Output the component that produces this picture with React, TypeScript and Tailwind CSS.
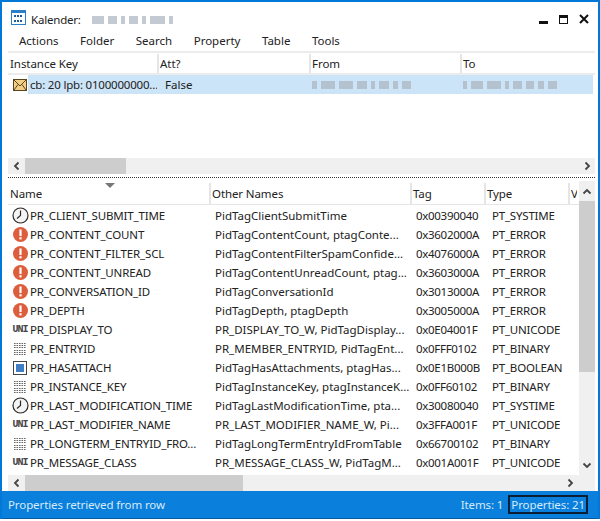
const UPPER_COLS = 'grid grid-cols-[149px_152px_151px_133px]';
const LOWER_COLS = 'grid grid-cols-[201px_201px_74px_84px_9px]';

type Kind = 'clock' | 'error' | 'uni' | 'bin' | 'bool';

const ROWS: [Kind, string, string, string, string][] = [
  ['clock', 'PR_CLIENT_SUBMIT_TIME', 'PidTagClientSubmitTime', '0x00390040', 'PT_SYSTIME'],
  ['error', 'PR_CONTENT_COUNT', 'PidTagContentCount, ptagConte...', '0x3602000A', 'PT_ERROR'],
  ['error', 'PR_CONTENT_FILTER_SCL', 'PidTagContentFilterSpamConfide...', '0x4076000A', 'PT_ERROR'],
  ['error', 'PR_CONTENT_UNREAD', 'PidTagContentUnreadCount, ptag...', '0x3603000A', 'PT_ERROR'],
  ['error', 'PR_CONVERSATION_ID', 'PidTagConversationId', '0x3013000A', 'PT_ERROR'],
  ['error', 'PR_DEPTH', 'PidTagDepth, ptagDepth', '0x3005000A', 'PT_ERROR'],
  ['uni', 'PR_DISPLAY_TO', 'PR_DISPLAY_TO_W, PidTagDisplay...', '0x0E04001F', 'PT_UNICODE'],
  ['bin', 'PR_ENTRYID', 'PR_MEMBER_ENTRYID, PidTagEnt...', '0x0FFF0102', 'PT_BINARY'],
  ['bool', 'PR_HASATTACH', 'PidTagHasAttachments, ptagHas...', '0x0E1B000B', 'PT_BOOLEAN'],
  ['bin', 'PR_INSTANCE_KEY', 'PidTagInstanceKey, ptagInstanceK...', '0x0FF60102', 'PT_BINARY'],
  ['clock', 'PR_LAST_MODIFICATION_TIME', 'PidTagLastModificationTime, pta...', '0x30080040', 'PT_SYSTIME'],
  ['uni', 'PR_LAST_MODIFIER_NAME', 'PR_LAST_MODIFIER_NAME_W, Pi...', '0x3FFA001F', 'PT_UNICODE'],
  ['bin', 'PR_LONGTERM_ENTRYID_FRO...', 'PidTagLongTermEntryIdFromTable', '0x66700102', 'PT_BINARY'],
  ['uni', 'PR_MESSAGE_CLASS', 'PR_MESSAGE_CLASS_W, PidTagM...', '0x001A001F', 'PT_UNICODE'],
];

function PropIcon({ kind }: { kind: Kind }) {
  if (kind === 'clock') {
    return (
      <svg width="17" height="17" viewBox="0 0 17 17" fill="none">
        <circle cx="8.5" cy="8.5" r="7.5" fill="#f4f4f4" stroke="#2b2b2b" strokeWidth="1.2" />
        <path d="M8.5 3.5V8.5L5 11.5" stroke="#2b2b2b" strokeWidth="1.2" />
      </svg>
    );
  }
  if (kind === 'error') {
    return (
      <svg width="15" height="15" viewBox="0 0 15 15">
        <circle cx="7.5" cy="7.5" r="7.5" fill="#dc5e3c" />
        <rect x="6.4" y="2.5" width="2.2" height="6.5" fill="#fff" />
        <rect x="6.4" y="10.2" width="2.2" height="2.2" fill="#fff" />
      </svg>
    );
  }
  if (kind === 'uni') {
    return (
      <span className="font-['Liberation_Mono',monospace] text-[10px] font-bold leading-none tracking-[-1px] text-[#444]">
        UNI
      </span>
    );
  }
  if (kind === 'bin') {
    return (
      <svg width="12" height="12" viewBox="0 0 12 12" fill="#666">
        {[0, 2, 4, 7, 9, 11].map((y) =>
          [0, 2.5, 5, 7.5, 10].map((x) => <rect key={`${x}-${y}`} x={x} y={y} width="1.6" height="1" />),
        )}
      </svg>
    );
  }
  return (
    <svg width="14" height="14" viewBox="0 0 14 14">
      <rect x="0.5" y="0.5" width="13" height="13" fill="#fff" stroke="#444" />
      <rect x="3" y="3" width="8" height="8" fill="#3f7ec4" />
    </svg>
  );
}

function Chevron({ dir }: { dir: 'left' | 'right' | 'up' | 'down' }) {
  const d = {
    left: 'M6.5 1.5L3 5L6.5 8.5',
    right: 'M3.5 1.5L7 5L3.5 8.5',
    up: 'M1.5 6.5L5 3L8.5 6.5',
    down: 'M1.5 3.5L5 7L8.5 3.5',
  }[dir];
  return (
    <svg width="10" height="10" viewBox="0 0 10 10" fill="none">
      <path d={d} stroke="#444" strokeWidth="1.8" />
    </svg>
  );
}

// stands in for the pixelated text in the picture
function Smudge({ widths }: { widths: number[] }) {
  return (
    <div className="flex items-center gap-[4px] blur-[0.6px]">
      {widths.map((w, i) => (
        <div key={i} className="h-[8px] bg-[#a9b4bd] opacity-70" style={{ width: w }} />
      ))}
    </div>
  );
}

function HeaderCell({ label, first }: { label: string; first?: boolean }) {
  return (
    <div className={`flex items-center overflow-hidden leading-[18px] ${first ? 'pl-[2px]' : 'border-l-2 border-[#e5e5e5] pl-[1px]'}`}>
      <span>{label}</span>
    </div>
  );
}

function HScroll({ thumb, end }: { thumb: string; end: string }) {
  return (
    <div className={`flex h-[16px] items-center justify-between bg-[#f0f0f0] ${end}`}>
      <div className="flex h-full items-center">
        <div className="flex w-[17px] justify-center">
          <Chevron dir="left" />
        </div>
        <div className={`h-full bg-[#cdcdcd] ${thumb}`} />
      </div>
      <Chevron dir="right" />
    </div>
  );
}

export default function App() {
  return (
    <div className="h-[521px] w-[600px] overflow-hidden bg-white">
      <div className="flex h-[519px] w-full flex-col border-x-2 border-t-2 border-[#0078d7] font-['Noto_Sans',sans-serif] text-[11.5px] leading-none text-[#222]">
        <div className="flex h-[30px] shrink-0 items-center justify-between px-[9px]">
          <div className="flex items-center gap-[5px]">
            <svg width="15" height="15" viewBox="0 0 15 15">
              <rect x="0.5" y="0.5" width="14" height="14" fill="#fff" stroke="#2a7fc9" />
              <rect x="1" y="1" width="13" height="2" fill="#2a7fc9" />
              {[4, 7, 10].map((x) => (
                <g key={x} fill="#1c5c9c">
                  <rect x={x - 1} y="5" width="2" height="2" />
                  <rect x={x - 1} y="10" width="2" height="2" />
                </g>
              ))}
            </svg>
            <span className="mt-[5px] tracking-[-0.2px]">Kalender:</span>
            <div className="mt-[5px] ml-[6px]">
              <Smudge widths={[12, 9, 4, 9, 4, 15, 4]} />
            </div>
          </div>
          <div className="mt-[4px] flex items-center gap-[11px]">
            <div className="mt-[6px] h-[3px] w-[9px] bg-[#111]" />
            <div className="h-[9px] w-[9px] border border-t-[3px] border-[#111]" />
            <svg width="10" height="10" viewBox="0 0 10 10">
              <path d="M1 1L9 9M9 1L1 9" stroke="#111" strokeWidth="2" />
            </svg>
          </div>
        </div>
        <div className="mb-[2px] flex h-[17px] shrink-0 items-center gap-[21.5px] pl-[17px]">
          <span>Actions</span>
          <span>Folder</span>
          <span>Search</span>
          <span>Property</span>
          <span>Table</span>
          <span>Tools</span>
        </div>
        <div className="mr-[3px] ml-[6px] flex h-[107px] shrink-0 flex-col">
          <div className={`${UPPER_COLS} h-[24px] shrink-0 border-y-2 border-[#ececec] pt-[1px] tracking-[-0.05px]`}>
            <HeaderCell label="Instance Key" first />
            <HeaderCell label="Att?" />
            <HeaderCell label="From" />
            <HeaderCell label="To" />
          </div>
          <div className={`${UPPER_COLS} h-[19px] shrink-0 items-center`}>
            <div className="flex items-center overflow-hidden">
              <svg className="ml-[5px] shrink-0" width="14" height="12" viewBox="0 0 14 12">
                <rect x="0.5" y="0.5" width="13" height="11" fill="#f2cf85" stroke="#5a4520" />
                <path d="M1 1L7 7L13 1M1 11L5 5.5M13 11L9 5.5" fill="none" stroke="#5a4520" />
              </svg>
              <div className="ml-[1px] h-[19px] flex-1 whitespace-nowrap bg-[#cce4f7] pl-[2px] leading-[20px] tracking-[-0.2px]">
                cb: 20 lpb: 0100000000...
              </div>
            </div>
            <div className="h-[19px] bg-[#cce4f7] pl-[8px] leading-[20px]">False</div>
            <div className="flex h-[19px] items-center bg-[#cce4f7] pl-[3px]">
              <Smudge widths={[5, 14, 14, 10, 4, 10, 5, 9]} />
            </div>
            <div className="flex h-[19px] items-center bg-[#cce4f7] pl-[3px]">
              <Smudge widths={[4, 12, 14, 4, 9, 8, 6, 9]} />
            </div>
          </div>
        </div>
        <div className="mr-[3px] ml-[6px] shrink-0">
          <HScroll thumb="w-[101px]" end="pr-[3px]" />
        </div>
        <div className="mt-[3px] mr-[3px] ml-[6px] shrink-0 border-t border-dotted border-[#333]" />
        <div className="mr-[3px] ml-[6px] flex h-[297px] shrink-0">
          <div className="min-w-0 flex-1">
            <div className="relative h-[28px]">
              <svg className="absolute top-[5px] left-[97px]" width="10" height="5" viewBox="0 0 10 5">
                <path d="M0 0H10L5 5Z" fill="#777" />
              </svg>
              <div className={`${LOWER_COLS} h-[27px] overflow-hidden border-b border-[#e5e5e5] pt-[5px] tracking-[-0.1px]`}>
                <HeaderCell label="Name" first />
                <HeaderCell label="Other Names" />
                <HeaderCell label="Tag" />
                <HeaderCell label="Type" />
                <HeaderCell label="V" />
              </div>
            </div>
            {ROWS.map(([kind, name, other, tag, type]) => (
              <div key={name} className={`${LOWER_COLS} h-[19px] items-center whitespace-nowrap leading-[19px]`}>
                <div className="flex items-center overflow-hidden">
                  <div className="flex w-[22px] shrink-0 justify-center pl-[2px]">
                    <PropIcon kind={kind} />
                  </div>
                  <span className="tracking-[-0.15px]">{name}</span>
                </div>
                <div className="overflow-hidden pl-[6px]">{other}</div>
                <div className="pl-[6px] tracking-[-0.3px]">{tag}</div>
                <div className="pl-[8px] tracking-[-0.2px]">{type}</div>
                <div />
              </div>
            ))}
          </div>
          <div className="mt-[3px] flex w-[16px] flex-col items-center bg-[#f0f0f0]">
            <div className="mt-[6px]">
              <Chevron dir="up" />
            </div>
            <div className="mt-[4px] h-[171px] w-full bg-[#cdcdcd]" />
            <div className="mt-auto mb-[5px]">
              <Chevron dir="down" />
            </div>
          </div>
        </div>
        <div className="mr-[3px] ml-[6px] shrink-0">
          <HScroll thumb="w-[218px]" end="pr-[20px]" />
        </div>
        <div className="flex flex-1 items-center justify-between border-b border-[#075a9e] bg-[#0a7fdc] pr-[10px] pl-[6px] text-[#d6eafa]">
          <span className="tracking-[-0.1px]">Properties retrieved from row</span>
          <div className="flex items-center gap-[5px]">
            <span className="tracking-[-0.1px]">Items: 1</span>
            <span className="border-2 border-[#0a1f33] px-[1px] py-[2px] tracking-[-0.1px]">Properties: 21</span>
          </div>
        </div>
      </div>
    </div>
  );
}
